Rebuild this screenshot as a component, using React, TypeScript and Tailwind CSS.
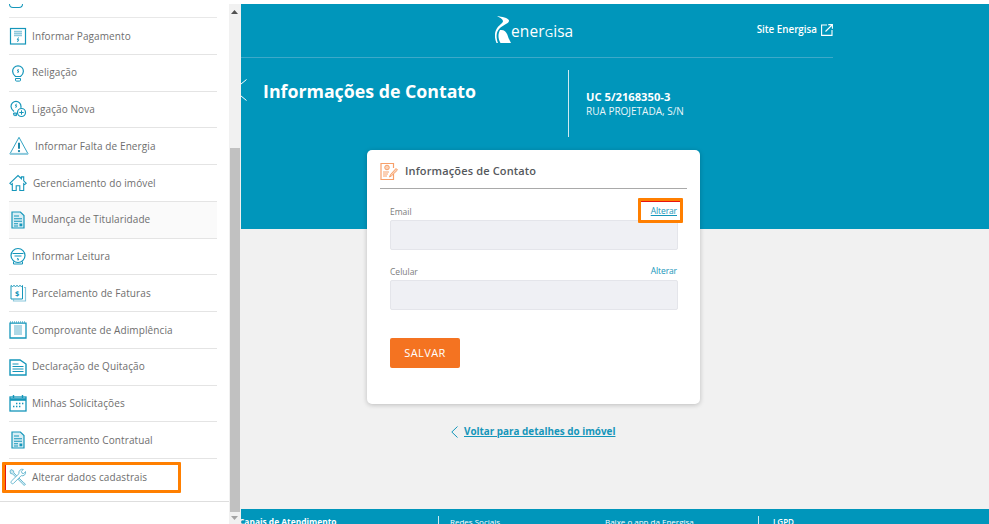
import React from "react";

const Ic = ({ size = 18, children }: { size?: number; children: React.ReactNode }) => (
  <svg width={size} height={size} viewBox="0 0 18 18" fill="none" stroke="#1596ba" strokeWidth="1" className="shrink-0">
    {children}
  </svg>
);

const PagamentoIcon = () => (
  <Ic>
    <rect x="1.5" y="1.5" width="15" height="15.5" strokeWidth="1.2" />
    <path d="M5 4.5h8M5 6.5h8M5 8.5h8" stroke="#8cc8dc" strokeWidth="1.4" />
    <path d="M9.5 10.5l-1.2 2.2h1.4l-1.2 2.2" />
  </Ic>
);

const ReligacaoIcon = () => (
  <Ic>
    <path d="M6.5 12.5C5 11.3 3.6 9.8 3.6 7.2a5.4 5.4 0 0 1 10.8 0c0 2.6-1.4 4.1-2.9 5.3z" strokeWidth="1.2" />
    <path d="M6.5 14.5h5v1.6a1 1 0 0 1-1 1h-3a1 1 0 0 1-1-1z" />
    <path d="M9.4 5l-1 2h1.3l-1 2" />
  </Ic>
);

const LigacaoIcon = () => (
  <Ic>
    <path d="M5 11.5C3.5 10.3 2 8.8 2 6.4a5 5 0 0 1 10 0c0 .6-.1 1-.2 1.5" strokeWidth="1.2" />
    <path d="M7.4 3.8l-1 2h1.3l-1 2" />
    <path d="M4.6 13h3v2.6h-2a1 1 0 0 1-1-1z" fill="#8cc8dc" />
    <circle cx="12.5" cy="12.5" r="4" strokeWidth="1.2" fill="#fff" />
    <path d="M12.5 10.3v4.4M10.3 12.5h4.4" />
  </Ic>
);

const FaltaIcon = () => (
  <Ic size={20}>
    <path d="M9 1.2L.8 16.2h16.4z" strokeWidth="0.8" />
    <path d="M.9 15.9h16.2" stroke="#8cc8dc" strokeWidth="1.4" />
    <path d="M9 6v5.5" stroke="#0f7fa3" strokeWidth="1.7" />
    <circle cx="9" cy="13.6" r="1" fill="#0f7fa3" stroke="none" />
  </Ic>
);

const HomeIcon = () => (
  <Ic>
    <path d="M.8 9.3L9 1.6l3.4 3.1V2.9h2.3v3.9l2.5 2.5-1.5 1.3-1-.9v6.8h-3.9v-4.8H7.2v4.8H3.3v-6.8l-1 .9z" strokeWidth="1.1" />
  </Ic>
);

const DocIcon = () => (
  <Ic>
    <path d="M3 1h8.4L15 4.6V17H3z" fill="#d8eef5" strokeWidth="1.2" />
    <path d="M5 5h5M5 7.8h8M5 10.3h8M5 12.8h4M5 15h4" strokeWidth="1.1" />
    <rect x="10.5" y="12.5" width="2.8" height="2.8" fill="#1596ba" stroke="none" />
  </Ic>
);

const LeituraIcon = () => (
  <Ic>
    <circle cx="9" cy="8.5" r="7" strokeWidth="1.2" />
    <path d="M3.5 6.5h11M5.5 9h7" strokeWidth="1.2" />
    <path d="M4.5 14.5V17h9v-2.5" />
    <path d="M9 11l-.7 1.2h1.3L9 13.5" />
  </Ic>
);

const ParcelamentoIcon = () => (
  <Ic>
    <path d="M15 3.5h1.5V17H4.5v-1.5" stroke="#8cc8dc" strokeWidth="1.2" />
    <path d="M2 1.5l1.5 1 1.5-1 1.5 1 1.5-1 1.5 1 1.5-1 1.5 1 1 -1V15H2z" />
    <text x="6" y="11.5" fontSize="7.5" fontWeight="700" fill="#1596ba" stroke="none" fontFamily="Open Sans">$</text>
  </Ic>
);

const ComprovanteIcon = () => (
  <Ic>
    <path d="M1 2.2h16V17H1z" strokeWidth="1.3" />
    <path d="M1 1h16" strokeDasharray="1 1" />
    <path d="M5 5h8M5 7h8M5 9h8M5 11h8M5 13h8" stroke="#5fb2cd" strokeWidth="1.1" />
  </Ic>
);

const QuitacaoIcon = () => (
  <Ic>
    <path d="M1 2h10l6 4v11H1z" strokeWidth="1.4" />
    <path d="M3.5 6h6M3.5 8.5h11M3.5 11h11M3.5 13.5h11" strokeWidth="1.2" />
  </Ic>
);

const CalendarIcon = () => (
  <Ic>
    <rect x="1" y="3" width="16" height="14" strokeWidth="1.3" />
    <path d="M1 5.5h16" stroke="#1596ba" strokeWidth="2.6" />
    <path d="M4.5 1v3M13.5 1v3" strokeWidth="1.4" />
    <path d="M7 9.5h1.4M10 9.5h1.4M13 9.5h1.4M4 12.5h1.4M7 12.5h1.4M10 12.5h1.4" strokeWidth="1.5" />
  </Ic>
);

const ToolsIcon = () => (
  <Ic>
    <g stroke="#6dbbd3">
      <path d="M2 1.5l2.5 1.3.3 2 9.4 9.4 2.3 2-1.3 1.3-2.2-2.2-9.4-9.4-2-.4L1 3z" fill="#cfe9f1" />
      <path d="M16.5 3.5a3.4 3.4 0 0 1-4.3 4.2L4.4 15.5a1.6 1.6 0 0 1-2.2-2.2L10 5.6A3.4 3.4 0 0 1 14.3 1.4L12.4 3.3l.6 1.9 1.8.5z" fill="#fff" />
    </g>
  </Ic>
);

const rows: { label: string; icon: React.ReactNode; pl?: string; soft?: boolean }[] = [
  { label: "Informar Pagamento", icon: <PagamentoIcon /> },
  { label: "Religação", icon: <ReligacaoIcon /> },
  { label: "Ligação Nova", icon: <LigacaoIcon /> },
  { label: "Informar Falta de Energia", icon: <FaltaIcon />, pl: "gap-[6px]" },
  { label: "Gerenciamento do imóvel", icon: <HomeIcon />, pl: "gap-[6px]" },
  { label: "Mudança de Titularidade", icon: <DocIcon />, soft: true },
  { label: "Informar Leitura", icon: <LeituraIcon /> },
  { label: "Parcelamento de Faturas", icon: <ParcelamentoIcon /> },
  { label: "Comprovante de Adimplência", icon: <ComprovanteIcon /> },
  { label: "Declaração de Quitação", icon: <QuitacaoIcon /> },
  { label: "Minhas Solicitações", icon: <CalendarIcon /> },
  { label: "Encerramento Contratual", icon: <DocIcon /> },
];

const Sidebar = () => (
  <div className="flex h-full w-[241px] shrink-0 bg-white">
    <div className="relative w-[229px] shrink-0 overflow-hidden">
      <div className="ml-[9px] mr-[12px] flex h-[18px] items-end overflow-hidden border-b border-[#e8e8e8]">
        <div className="mb-[9px] h-[4px] w-[14px] rounded-b-sm border-x border-b border-[#1596ba]" />
      </div>
      {rows.map((r) => (
        <div
          key={r.label}
          className={`ml-[9px] mr-[12px] flex h-[36.75px] items-center border-b border-[#e4e4e4] text-[10px] tracking-[0.1px] text-[#6e6e6e] ${r.pl ?? "gap-[5px]"} ${r.soft ? "bg-[#fafafa]" : ""}`}
        >
          {r.icon}
          <span className="pt-[0.5px]">{r.label}</span>
        </div>
      ))}
      <div className="relative ml-[9px] mr-[12px] flex h-[36.75px] items-center gap-[5px] text-[10px] tracking-[0.1px] text-[#6e6e6e]">
        <ToolsIcon />
        <span>Alterar dados cadastrais</span>
        <div className="absolute left-[-7px] top-[3px] h-[31px] w-[179px] rounded-[1px] border-[3px] border-[#ff7f00]">
          <div className="h-full w-px bg-[#e8130f]" />
        </div>
      </div>
      <div className="mt-[5px] border-t border-[#dedede]" />
    </div>
    <div className="mt-[4px] flex w-[12px] flex-col items-center bg-[#f1f1f1] pr-[1px]">
      <div className="flex h-[10px] items-center justify-center pt-[6px] text-[#505050]">
        <svg width="7" height="4" viewBox="0 0 7 4"><path d="M3.5 0L7 4H0z" fill="#505050" /></svg>
      </div>
      <div className="mt-[134px] h-[364px] w-[10px] bg-[#c1c1c1]" />
      <div className="flex flex-1 items-center justify-center">
        <svg width="7" height="4" viewBox="0 0 7 4"><path d="M0 0h7L3.5 4z" fill="#a3a3a3" /></svg>
      </div>
    </div>
  </div>
);

const Logo = () => (
  <div className="flex items-end">
    <svg width="16" height="27" viewBox="0 0 16 27" fill="#fff" className="shrink-0">
      <path d="M2 0C7 .8 13 1.8 14 4.5C14.5 7.5 8 9 4.5 12.5C1.5 15.5 .5 20 3 27H1.5C-1 21 -.5 15.5 2.5 11.5C4.5 8.8 8 7 8 5C7.5 3 5 1.5 2 0Z" />
      <path d="M5 14C9 13.5 11 15.5 12.3 18.5C13.2 21.5 14.5 24.5 16 27H5.5C3 23 2.8 18 5 14Z" />
    </svg>
    <span className="mb-[0px] text-[15.5px] font-medium leading-[20px] tracking-[0.1px] text-white">
      ener<span className="text-[11.5px]">G</span>isa
    </span>
  </div>
);

const ExternalIcon = () => (
  <svg width="12" height="12" viewBox="0 0 12 12" fill="none" stroke="#fff" strokeWidth="1.1" className="shrink-0">
    <path d="M6 1H.6v10.4H11V6" />
    <path d="M4.5 7.5L11 1M7.3 .6h4.1v4.1" />
  </svg>
);

const Chevron = ({ h, w, color }: { h: number; w: number; color: string }) => (
  <svg width={w} height={h} viewBox={`0 0 ${w} ${h}`} fill="none" stroke={color} strokeWidth="1" className="shrink-0">
    <path d={`M${w - 0.5} 0.5L0.8 ${h / 2}L${w - 0.5} ${h - 0.5}`} />
  </svg>
);

const CardIcon = () => (
  <svg width="19" height="19" viewBox="0 0 19 19" fill="none" stroke="#f7a06a" strokeWidth="1" className="shrink-0">
    <path d="M13.5 12v5.5H1V1.5h12.5V6" strokeWidth="1.2" />
    <circle cx="7" cy="5.5" r="2.3" fill="#fbd3b8" />
    <path d="M3 10h6M3 12h5M3 14h4" />
    <path d="M9.5 15l1-2.5L16 6.5l1.5 1.5-6 5.8z" fill="#fbd3b8" />
  </svg>
);

const Field = ({ label, boxed }: { label: string; boxed?: boolean }) => (
  <div>
    <div className="relative flex h-[16px] items-center justify-between text-[8.5px]">
      <span className="text-[#7d7d7d]">{label}</span>
      <a className={`pb-[1px] pr-[1px] tracking-[-0.1px] text-[#1596ba] ${boxed ? "underline" : ""}`}>Alterar</a>
      {boxed && (
        <div className="absolute right-[-5px] top-[-6px] h-[25px] w-[45px] rounded-[1px] border-[3px] border-[#ff7f00]">
          <div className="h-px w-full bg-[#e8130f]" />
        </div>
      )}
    </div>
    <div className="h-[30px] rounded-[2px] border border-[#e4e5ea] bg-[#eff0f4]" />
  </div>
);

export default function App() {
  return (
    <div className="flex h-[524px] w-[989px] overflow-hidden bg-white font-['Open_Sans',sans-serif]">
      <Sidebar />
      <div className="flex min-w-0 flex-1 flex-col overflow-hidden pt-[4px]">
        <div className="h-[225px] shrink-0 bg-[#0096bb]">
          <div className="w-[592px] text-white">
            <div className="relative flex h-[54px] items-center justify-end border-b border-[#3da9c9] pb-[1px]">
              <div className="absolute left-[254px] top-[12px]">
                <Logo />
              </div>
              <div className="flex items-center gap-[4px] text-[9.8px] font-semibold">
                <span>Site Energisa</span>
                <ExternalIcon />
              </div>
            </div>
            <div className="flex pt-[12px]">
              <div className="ml-[-8px] mt-[10px] flex w-[335px] items-start">
                <div className="mr-[16px] mt-[-1px] flex w-[14px] justify-start">
                  <Chevron w={14} h={22} color="#ffffff" />
                </div>
                <h1 className="pt-[1px] text-[17.75px] font-bold leading-[20px]">Informações de Contato</h1>
              </div>
              <div className="h-[67px] w-px bg-[#cfeaf2]" />
              <div className="ml-[17px] mt-[20px] text-[11.2px] leading-[14px]">
                <div className="font-bold">UC 5/2168350-3</div>
                <div className="text-[10px] text-[#e8f5f9]">RUA PROJETADA, S/N</div>
              </div>
            </div>
          </div>
        </div>
        <div className="flex flex-1 flex-col bg-[#f1f1f1]">
          <div className="mx-[126px] -mt-[79px] h-[254px] w-[333px] rounded-[5px] bg-white px-[13px] pt-[12px] shadow-[0_1px_5px_rgba(0,0,0,0.22)]">
            <div className="flex h-[27px] items-start gap-[6px] border-b border-[#a9a9a9]">
              <CardIcon />
              <span className="text-[11px] font-semibold leading-[18px] tracking-[0.15px] text-[#55585c]">
                Informações de Contato
              </span>
            </div>
            <div className="pl-[10px] pr-[9px] pt-[15px]">
              <Field label="Email" boxed />
              <div className="mt-[14px]">
                <Field label="Celular" />
              </div>
              <button className="mt-[28px] h-[30px] w-[70px] rounded-[2px] bg-[#f47321] text-[11px] tracking-[0.4px] text-white">
                SALVAR
              </button>
            </div>
          </div>
          <div className="mt-[20px] flex h-[15px] items-center gap-[6px] pl-[210px]">
            <Chevron w={7} h={12} color="#1596ba" />
            <a className="text-[9.9px] font-bold text-[#1596ba] underline">Voltar para detalhes do imóvel</a>
          </div>
        </div>
        <div className="flex h-[15px] shrink-0 items-start overflow-hidden bg-[#0096bb] pt-[7px] text-[8px] leading-[12px] text-white">
          <span className="ml-[-2px] w-[199px] text-[8.4px] font-bold">Canais de Atendimento</span>
          <div className="h-[12px] w-px bg-[#cfeaf2]" />
          <span className="ml-[11px] w-[155px]">Redes Sociais</span>
          <span className="w-[153px]">Baixe o app da Energisa</span>
          <div className="h-[12px] w-px bg-[#cfeaf2]" />
          <span className="ml-[14px] font-semibold">LGPD</span>
        </div>
      </div>
    </div>
  );
}
